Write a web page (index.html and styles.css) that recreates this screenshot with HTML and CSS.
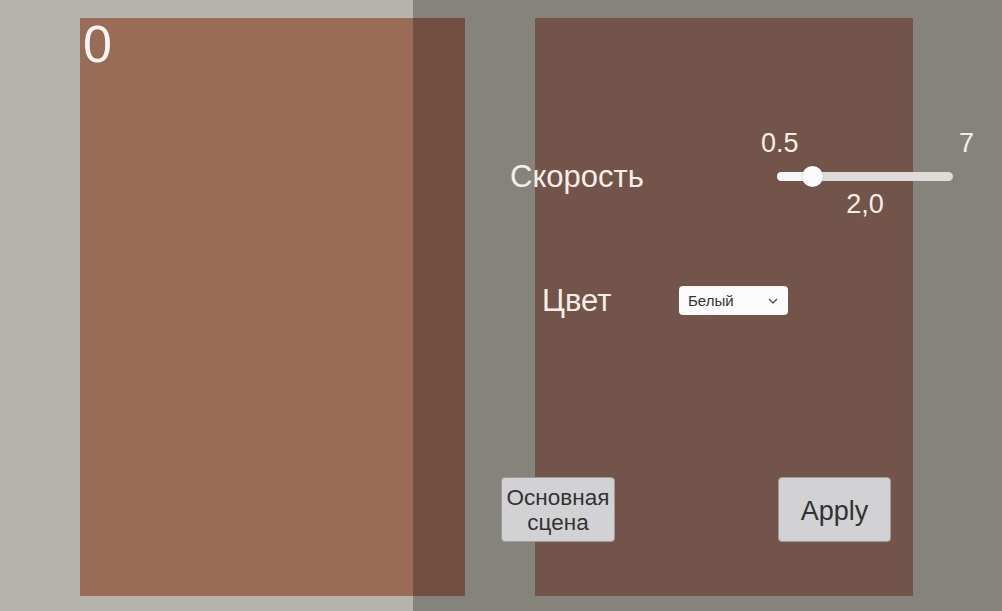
FILE: index.html
```html
<!DOCTYPE html>
<html lang="ru">
<head>
<meta charset="utf-8">
<title>Настройки</title>
<link rel="stylesheet" href="styles.css">
</head>
<body>
<div class="stage">
  <div class="game-panel">
    <div class="score">0</div>
  </div>
</div>
<div class="overlay">
  <div class="settings">
    <div class="speed-grid">
      <div class="speed-label">Скорость</div>
      <div class="slider-top"><span>0.5</span><span>7</span></div>
      <div class="slider-track">
        <div class="track">
          <div class="track-fill"></div>
          <div class="handle"></div>
        </div>
      </div>
      <div class="slider-value">2,0</div>
    </div>
    <div class="color-row">
      <div class="color-label">Цвет</div>
      <div class="dropdown">
        <span>Белый</span>
        <svg class="chevron" width="10" height="6" viewBox="0 0 10 6"><path d="M1 1 L5 5 L9 1" fill="none" stroke="#505050" stroke-width="1.3"/></svg>
      </div>
    </div>
    <div class="button-row">
      <button class="btn btn-main">Основная<br>сцена</button>
      <button class="btn btn-apply">Apply</button>
    </div>
  </div>
</div>
</body>
</html>
```

FILE: styles.css
```css
html, body {
  margin: 0;
  padding: 0;
}
body {
  width: 1002px;
  height: 611px;
  overflow: hidden;
  background: #b6b3ac;
  font-family: "Liberation Sans", Arial, sans-serif;
  position: relative;
}
.stage {
  display: flex;
  padding: 18px 0 0 80px;
}
.game-panel {
  width: 385px;
  height: 578px;
  background: #9a6b56;
}
.score {
  color: #fbf7f2;
  font-size: 52px;
  line-height: 52px;
  padding-left: 3px;
}
.overlay {
  position: absolute;
  left: 413px;
  top: 0;
  right: 0;
  bottom: 0;
  background: rgba(22, 20, 18, 0.3);
  padding: 18px 0 0 122px;
  box-sizing: border-box;
}
.settings {
  width: 378px;
  height: 578px;
  background: #72544a;
  display: flex;
  flex-direction: column;
  align-items: flex-start;
  color: #f4eee7;
}
.speed-grid {
  display: grid;
  grid-template-columns: 251px 213px;
  grid-template-rows: 26px 9px 22px 4px 26px;
  margin: 112px 0 0 -25px;
}
.speed-label {
  grid-column: 1;
  grid-row: 3;
  align-self: center;
  font-size: 31px;
  line-height: 31px;
  white-space: nowrap;
  padding-top: 1px;
}
.slider-top {
  grid-column: 2;
  grid-row: 1;
  display: flex;
  justify-content: space-between;
  font-size: 27px;
  line-height: 26px;
}
.slider-track {
  grid-column: 2;
  grid-row: 3;
  padding-left: 16px;
  display: flex;
  align-items: center;
}
.track {
  position: relative;
  width: 176px;
  height: 9px;
  border-radius: 5px;
  background: #dedbd8;
}
.track-fill {
  width: 36px;
  height: 9px;
  border-radius: 5px 0 0 5px;
  background: #f8f8f8;
}
.handle {
  position: absolute;
  left: 25px;
  top: -6px;
  width: 21px;
  height: 21px;
  border-radius: 50%;
  background: #fbfbfb;
  box-shadow: 0 0 1px rgba(0, 0, 0, 0.35);
}
.slider-value {
  grid-column: 2;
  grid-row: 5;
  padding-left: 16px;
  width: 176px;
  text-align: center;
  font-size: 27px;
  line-height: 26px;
}
.color-row {
  display: flex;
  align-items: center;
  margin: 69px 0 0 7px;
}
.color-label {
  width: 137px;
  font-size: 31px;
  line-height: 29px;
}
.dropdown {
  width: 109px;
  height: 29px;
  box-sizing: border-box;
  background: #fcfcfc;
  border-radius: 4px;
  display: flex;
  align-items: center;
  justify-content: space-between;
  padding: 0 10px 0 9px;
  font-size: 15px;
  color: #333;
}
.chevron {
  display: block;
}
.button-row {
  display: flex;
  gap: 163px;
  margin: 162px 0 0 -34px;
}
.btn {
  height: 65px;
  box-sizing: border-box;
  border: 1px solid #9e9c9a;
  border-radius: 4px;
  background: #d2d2d4;
  color: #333;
  font-family: "Liberation Sans", Arial, sans-serif;
  padding: 0;
  margin: 0;
}
.btn-main {
  width: 114px;
  font-size: 22.5px;
  line-height: 25px;
}
.btn-apply {
  width: 113px;
  font-size: 27px;
  line-height: 30px;
  padding-top: 2px;
}
```
